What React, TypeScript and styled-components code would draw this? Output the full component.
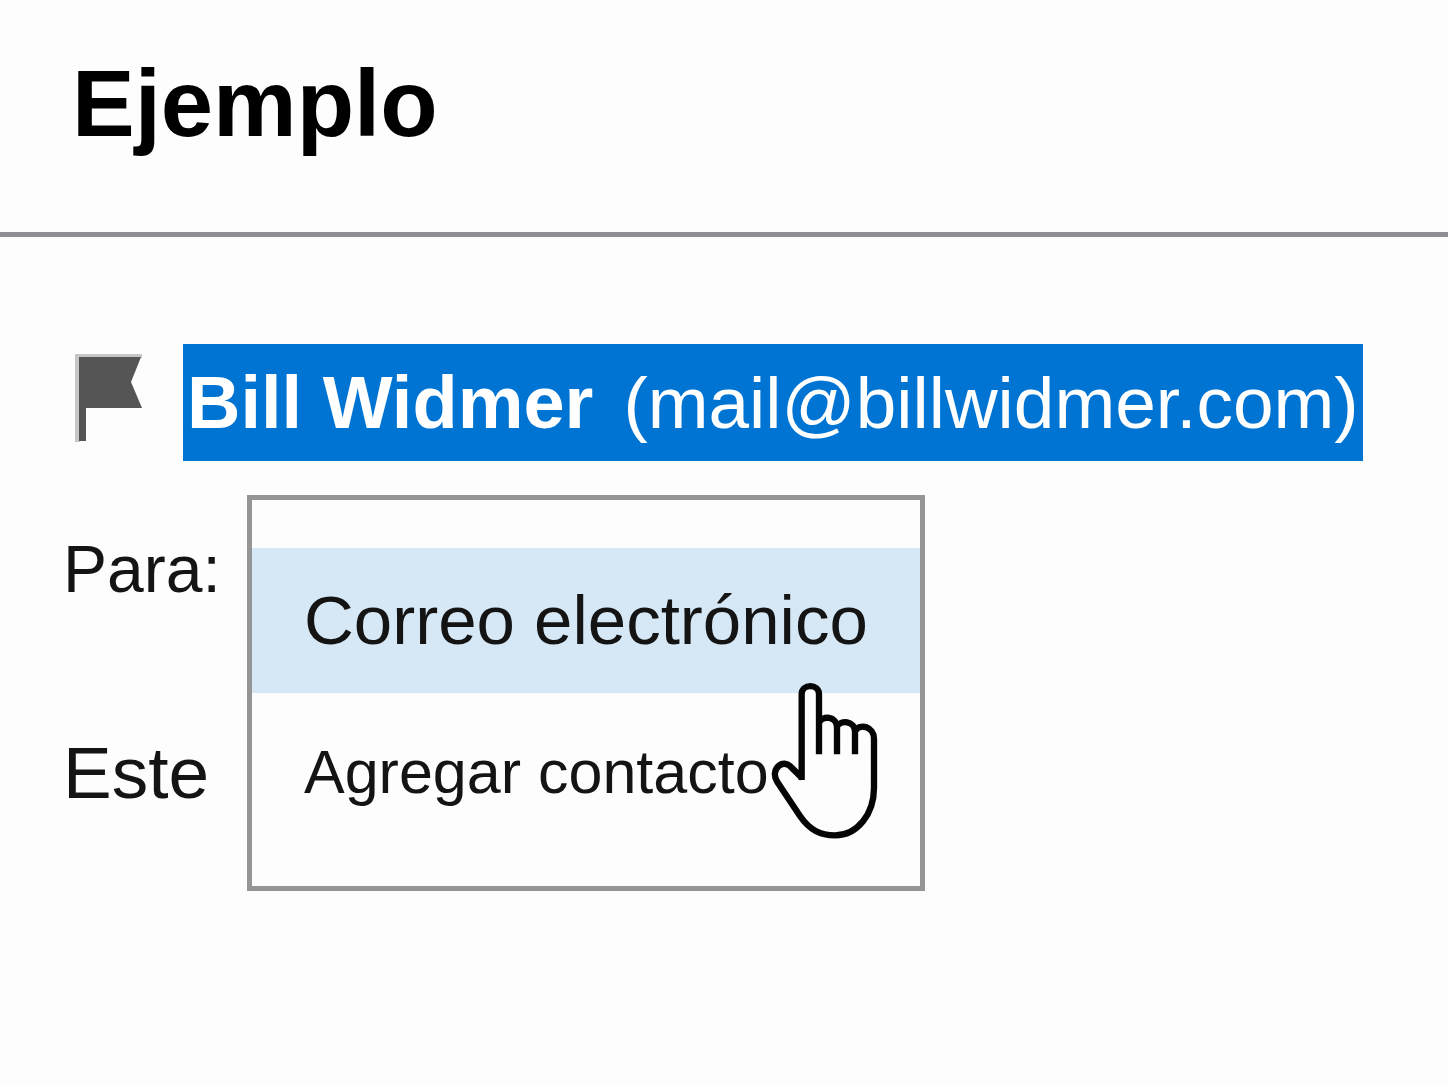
import React from "react";
import styled, { createGlobalStyle } from "styled-components";

const GlobalStyle = createGlobalStyle`
  *, *::before, *::after { box-sizing: border-box; }
  body {
    margin: 0;
    background: #fdfdfd;
    color: #141414;
    font-family: "Liberation Sans", Arial, sans-serif;
  }
`;

const Header = styled.header`
  padding: 48px 72px 72px;
  border-bottom: 5px solid #8f8f96;
`;

const Title = styled.h1`
  margin: 0;
  color: #000;
  font-size: 94px;
  line-height: 112px;
  font-weight: 700;
`;

const Message = styled.main`
  padding: 107px 64px 64px 63px;
`;

const Sender = styled.div`
  display: flex;
  align-items: flex-start;
`;

const FlagButton = styled.button`
  flex: none;
  width: 120px;
  padding: 8px 10px 0;
  border: 0;
  background: none;
  text-align: left;
`;

const FlagIcon = styled.svg`
  display: block;
  width: 72px;
  height: 92px;
`;

const Address = styled.p`
  display: flex;
  align-items: baseline;
  gap: 30px;
  margin: 0;
  padding: 0 4px;
  background: #0074d3;
  color: #fff;
  font-size: 73px;
  line-height: 117px;
  white-space: nowrap;
`;

const Name = styled.strong`
  font-size: 74px;
`;

const Details = styled.div`
  display: grid;
  grid-template-columns: 184px max-content;
  align-items: start;
  padding-top: 34px;
`;

const Labels = styled.div`
  display: grid;
  gap: 108px;
  padding-top: 26px;
  line-height: 96px;
`;

const Label = styled.span<{ $large?: boolean }>`
  display: block;
  font-size: ${(p) => (p.$large ? 73 : 66)}px;
`;

const Menu = styled.div`
  position: relative;
  display: grid;
  grid-template-columns: minmax(0, 1fr);
  grid-template-rows: 145px 157px;
  width: 678px;
  padding: 48px 0 36px;
  border: 5px solid #959595;
  background: #fdfdfd;
`;

const MenuItem = styled.button<{ $active?: boolean }>`
  padding: 0 24px 0 52px;
  border: 0;
  background: ${(p) => (p.$active ? "#d6e8f6" : "transparent")};
  color: inherit;
  font-family: inherit;
  font-size: ${(p) => (p.$active ? 69 : 61)}px;
  line-height: 96px;
  text-align: left;
  white-space: nowrap;
`;

const Pointer = styled.svg`
  position: absolute;
  right: 39px;
  bottom: 46px;
  width: 112px;
  height: 160px;
  pointer-events: none;
`;

export default function App() {
  return (
    <>
      <GlobalStyle />
      <Header>
        <Title>Ejemplo</Title>
      </Header>
      <Message>
        <Sender>
          <FlagButton type="button" aria-label="Marcar">
            <FlagIcon viewBox="0 0 72 92" aria-hidden="true">
              <path d="M2 2H69V6H7V90H2Z" fill="#c6c6c6" />
              <path d="M6 5H68L58 30L69 56H13V89H6Z" fill="#555" />
            </FlagIcon>
          </FlagButton>
          <Address>
            <Name>Bill Widmer</Name>
            <span>(mail@billwidmer.com)</span>
          </Address>
        </Sender>
        <Details>
          <Labels>
            <Label>Para:</Label>
            <Label $large>Este</Label>
          </Labels>
          <Menu role="menu">
            <MenuItem type="button" role="menuitem" $active>
              Correo electrónico
            </MenuItem>
            <MenuItem type="button" role="menuitem">
              Agregar contacto
            </MenuItem>
            <Pointer viewBox="57 62 336 480" aria-hidden="true">
              <path
                d="M155 362V105C155 72 207 72 207 105V185C225 167 255 172 261 198C278 181 309 187 315 211C335 190 372 203 372 238V385C372 463 323 528 255 528C211 528 179 512 150 470L82 368C58 333 98 292 126 326Z"
                fill="#fdfdfd"
              />
              <path
                d="M155 362V105C155 72 207 72 207 105V285M207 190C216 168 261 169 261 205V285M261 202C271 181 315 183 315 218V285M315 215C330 190 372 203 372 238V385C372 463 323 528 255 528C211 528 179 512 150 470L82 368C58 333 98 292 126 326L157 357"
                fill="none"
                stroke="#050505"
                strokeWidth="19"
              />
            </Pointer>
          </Menu>
        </Details>
      </Message>
    </>
  );
}
